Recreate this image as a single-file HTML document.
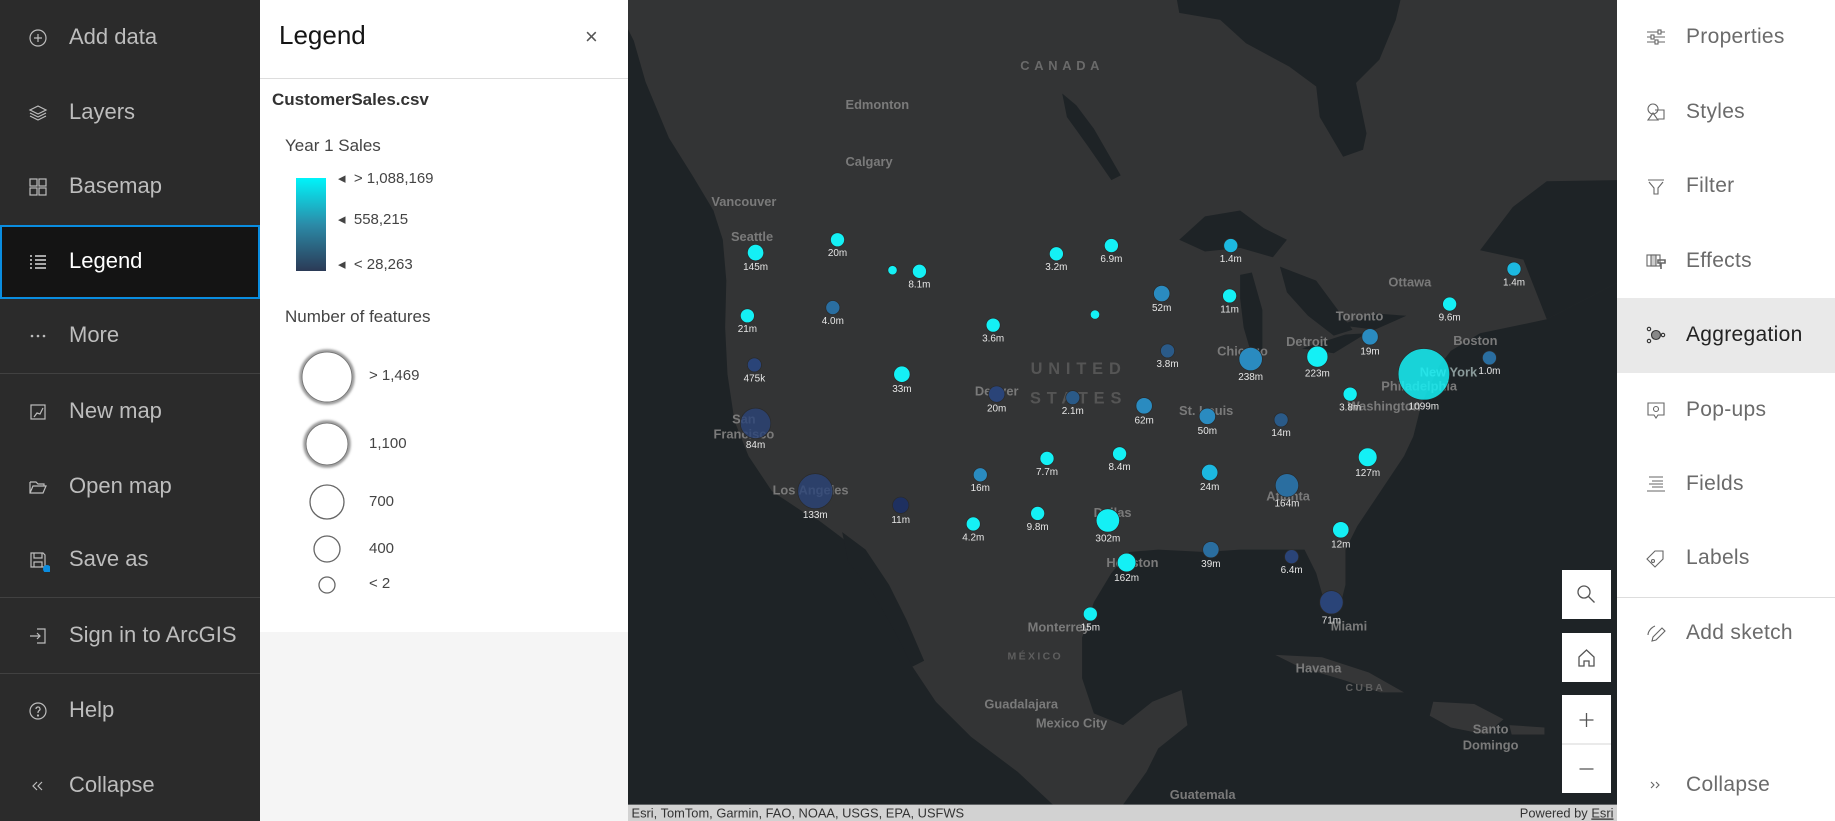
<!DOCTYPE html>
<html><head><meta charset="utf-8">
<style>
*{margin:0;padding:0;box-sizing:border-box}
body{width:1835px;height:821px;overflow:hidden;font-family:"Liberation Sans",sans-serif;background:#2b2b2b;position:relative}
#left{position:absolute;left:0;top:0;width:260px;height:821px;background:#2b2b2b}
.li{position:absolute;left:0;width:260px;height:40px;color:#bdbdbd;font-size:22px;line-height:40px}
.li span{position:absolute;left:69px}
.li svg{position:absolute;left:28px;top:11px}
.div{position:absolute;left:0;width:260px;height:1px;background:#414141}
#legend{position:absolute;left:260px;top:0;width:368px;height:821px;background:#f5f5f5}
#lp{position:absolute;left:0;top:0;width:368px;height:632px;background:#fff}
#map{position:absolute;left:628px;top:0;width:989px;height:821px}
#right{position:absolute;left:1617px;top:0;width:218px;height:821px;background:#fff}
.ri{position:absolute;left:0;width:218px;height:40px;color:#6b6b6b;font-size:21px;line-height:40px;letter-spacing:.3px}
.ri span{position:absolute;left:69px}
.ri svg{position:absolute;left:29px;top:10px}
.btn{position:absolute;left:1562px;width:49px;background:#fff}
</style></head><body>
<div id="left">
 <div style="position:absolute;left:0;top:225px;width:260px;height:74px;background:#141414;border:2px solid #0a8de0"></div>
 <div class="li" style="top:17px"><svg width="20" height="20" viewBox="0 0 20 20" fill="none" stroke="#bdbdbd" stroke-width="1.2"><circle cx="10" cy="10" r="8"/><path d="M10 6v8M6 10h8"/></svg><span>Add data</span></div>
 <div class="li" style="top:92px"><svg width="20" height="20" viewBox="0 0 20 20" fill="none" stroke="#bdbdbd" stroke-width="1.2"><path d="M10 3l8 4-8 4-8-4z M2 10l8 4 8-4 M2 13l8 4 8-4"/></svg><span>Layers</span></div>
 <div class="li" style="top:166px"><svg width="20" height="20" viewBox="0 0 20 20" fill="none" stroke="#bdbdbd" stroke-width="1.2"><rect x="2" y="2" width="7" height="7"/><rect x="11" y="2" width="7" height="7"/><rect x="2" y="11" width="7" height="7"/><rect x="11" y="11" width="7" height="7"/></svg><span>Basemap</span></div>
 <div class="li" style="top:241px;color:#fff"><svg width="20" height="20" viewBox="0 0 20 20" fill="none" stroke="#fff" stroke-width="1.3"><path d="M7 4h11M7 8h11M7 12h11M7 16h11M2 4h2M2 8h2M2 12h2M2 16h2"/></svg><span>Legend</span></div>
 <div class="li" style="top:315px"><svg width="20" height="20" viewBox="0 0 20 20" fill="#bdbdbd"><circle cx="4" cy="10" r="1.3"/><circle cx="10" cy="10" r="1.3"/><circle cx="16" cy="10" r="1.3"/></svg><span>More</span></div>
 <div class="div" style="top:373px"></div>
 <div class="li" style="top:391px"><svg width="20" height="20" viewBox="0 0 20 20" fill="none" stroke="#bdbdbd" stroke-width="1.2"><rect x="3" y="3" width="14" height="14"/><path d="M6 15l3-4 3 1 3-6"/></svg><span>New map</span></div>
 <div class="li" style="top:466px"><svg width="20" height="20" viewBox="0 0 20 20" fill="none" stroke="#bdbdbd" stroke-width="1.2"><path d="M2 5h6l2 2h6v2M2 5v11h13l3-7H5l-3 7"/></svg><span>Open map</span></div>
 <div class="li" style="top:539px"><svg width="22" height="22" viewBox="0 0 22 22" fill="none" stroke="#bdbdbd" stroke-width="1.2"><path d="M3 3h12l2 2v12H3z M6 3v5h8V3 M6 17v-5h8v5"/><circle cx="19" cy="19" r="4" fill="#0a8de0" stroke="none"/></svg><span>Save as</span></div>
 <div class="div" style="top:597px"></div>
 <div class="li" style="top:615px"><svg width="20" height="20" viewBox="0 0 20 20" fill="none" stroke="#bdbdbd" stroke-width="1.2"><path d="M9 3h8v14H9 M2 10h10M9 7l3 3-3 3"/></svg><span>Sign in to ArcGIS</span></div>
 <div class="div" style="top:673px"></div>
 <div class="li" style="top:690px"><svg width="20" height="20" viewBox="0 0 20 20" fill="none" stroke="#bdbdbd" stroke-width="1.2"><circle cx="10" cy="10" r="8"/><path d="M8 8a2 2 0 1 1 3 1.7c-1 .6-1 1-1 2.3"/><circle cx="10" cy="14.5" r=".5"/></svg><span>Help</span></div>
 <div class="li" style="top:765px"><svg width="20" height="20" viewBox="0 0 20 20" fill="none" stroke="#bdbdbd" stroke-width="1.2"><path d="M9 6l-4 4 4 4M14 6l-4 4 4 4"/></svg><span>Collapse</span></div>
</div>

<div id="legend">
 <div id="lp">
  <div style="position:absolute;left:19px;top:20px;font-size:26px;color:#151515">Legend</div>
  <div style="position:absolute;left:325px;top:24px;font-size:22px;color:#555">×</div>
  <div style="position:absolute;left:0;top:78px;width:368px;height:1px;background:#ddd"></div>
  <div style="position:absolute;left:12px;top:90px;font-size:17px;font-weight:bold;color:#323232">CustomerSales.csv</div>
  <div style="position:absolute;left:25px;top:136px;font-size:17px;color:#444">Year 1 Sales</div>
  <div style="position:absolute;left:36px;top:178px;width:30px;height:93px;background:linear-gradient(#00f4fa,#2b8ba8 50%,#2b3a56)"></div>
  <div style="position:absolute;left:78px;top:169px;font-size:15px;color:#444;line-height:20px">◂&nbsp; &gt; 1,088,169</div>
  <div style="position:absolute;left:78px;top:210px;font-size:15px;color:#444;line-height:20px">◂&nbsp; 558,215</div>
  <div style="position:absolute;left:78px;top:255px;font-size:15px;color:#444;line-height:20px">◂&nbsp; &lt; 28,263</div>
  <div style="position:absolute;left:25px;top:307px;font-size:17px;color:#444">Number of features</div>
  <svg style="position:absolute;left:0;top:340px" width="200" height="260">
   <defs><filter id="sh"><feGaussianBlur stdDeviation="1.2"/></filter></defs>
   <circle cx="67" cy="37" r="26" fill="none" stroke="#888" stroke-width="3" filter="url(#sh)"/><circle cx="67" cy="37" r="25" fill="#fff" stroke="#777" stroke-width="1"/>
   <circle cx="67" cy="104" r="22" fill="none" stroke="#888" stroke-width="3" filter="url(#sh)"/><circle cx="67" cy="104" r="21" fill="#fff" stroke="#777" stroke-width="1"/>
   <circle cx="67" cy="162" r="17" fill="#fff" stroke="#666" stroke-width="1.3"/>
   <circle cx="67" cy="209" r="13" fill="#fff" stroke="#666" stroke-width="1.3"/>
   <circle cx="67" cy="245" r="8" fill="#fff" stroke="#666" stroke-width="1.3"/>
  </svg>
  <div style="position:absolute;left:109px;top:367px;font-size:15px;color:#444">&gt; 1,469</div>
  <div style="position:absolute;left:109px;top:435px;font-size:15px;color:#444">1,100</div>
  <div style="position:absolute;left:109px;top:493px;font-size:15px;color:#444">700</div>
  <div style="position:absolute;left:109px;top:540px;font-size:15px;color:#444">400</div>
  <div style="position:absolute;left:109px;top:575px;font-size:15px;color:#444">&lt; 2</div>
 </div>
</div>

<svg id="map" viewBox="537 0 845 702" preserveAspectRatio="none" font-family="Liberation Sans, sans-serif">
 <rect x="537" y="0" width="845" height="702" fill="#1e2326"/>
 <path fill="#333435" d="M537 0 L1006 0 L1008 11 L1043 17 L1065 37 L1102 57 L1125 74 L1128 100 L1148 134 L1165 128 L1168 114 L1159 71 L1179 51 L1193 17 L1197 0 L1382 0 L1382 242 L1322 273 L1265 285 L1240 300 L1230 313 L1215 345 L1208 373 L1200 390 L1180 420 L1160 450 L1150 470 L1150 500 L1145 520 L1135 525 L1125 490 L1115 470 L1095 470 L1060 470 L1030 472 L990 470 L965 472 L950 490 L935 515 L925 545 L925 580 L935 610 L960 620 L985 600 L1010 590 L1015 620 L990 640 L980 660 L960 688 L900 688 L870 660 L830 630 L800 600 L780 570 L760 520 L740 480 L720 460 L700 445 L690 440 L660 420 L640 390 L628 360 L622 320 L620 280 L621 240 L618 205 L610 180 L592 150 L572 118 L552 70 L542 35 L537 25 Z"/>
 <path fill="#1e2326" d="M1382 154 L1322 155 L1293 177 L1265 214 L1302 222 L1322 273 L1382 242 Z"/>
 <path fill="#1e2326" d="M720 455 L740 470 L760 500 L775 530 L790 565 L780 570 L765 540 L745 505 L725 480 Z"/>
 <path fill="#353637" d="M1090 560 L1130 562 L1170 575 L1200 592 L1180 592 L1150 582 L1110 570 Z M1225 600 L1260 602 L1285 615 L1270 628 L1240 622 L1222 612 Z M1290 620 L1320 622 L1320 628 L1292 628Z"/>
 <path fill="#1e2326" d="M1008 205 L1030 185 L1060 180 L1080 195 L1100 205 L1088 220 L1060 212 L1030 215 Z M1060 235 L1070 233 L1079 265 L1079 300 L1070 304 L1063 280 L1060 255 Z M1094 228 L1125 240 L1156 282 L1140 287 L1118 270 L1100 250 Z M1113 298 L1150 286 L1168 285 L1140 302 Z M1145 278 L1175 268 L1202 270 L1175 282 Z M908 80 L920 90 L935 110 L958 150 L950 154 L930 125 L912 100 Z"/>
 <g font-weight="bold" fill="#7a7a7a" font-size="11" text-anchor="middle">
  <text x="908" y="60" letter-spacing="4" fill="#6a6a6a">CANADA</text>
  <text x="750" y="93">Edmonton</text><text x="743" y="142">Calgary</text><text x="636" y="176">Vancouver</text>
  <text x="643" y="206">Seattle</text><text x="1205" y="245">Ottawa</text><text x="1162" y="274">Toronto</text>
  <text x="1117" y="296">Detroit</text><text x="1062" y="304">Chicago</text><text x="1261" y="295">Boston</text>
  <text x="1238" y="322" fill="#8a9a9a">New York</text><text x="1213" y="334">Philadelphia</text><text x="1183" y="351">Washington</text>
  <text x="852" y="338">Denver</text><text x="1031" y="355">St. Louis</text><text x="636" y="362">San</text><text x="636" y="375">Francisco</text>
  <text x="693" y="423">Los Angeles</text><text x="951" y="442">Dallas</text><text x="1101" y="428">Atlanta</text>
  <text x="968" y="485">Houston</text><text x="1153" y="539">Miami</text><text x="905" y="540">Monterrey</text>
  <text x="885" y="564" font-size="9" letter-spacing="2" fill="#5e5e5e">MÉXICO</text><text x="1127" y="575">Havana</text>
  <text x="1167" y="591" font-size="9" letter-spacing="2" fill="#5e5e5e">CUBA</text><text x="873" y="606">Guadalajara</text>
  <text x="916" y="622">Mexico City</text><text x="1274" y="627">Santo</text><text x="1274" y="641">Domingo</text>
  <text x="1028" y="683">Guatemala</text>
  <text x="922" y="320" font-size="14" letter-spacing="5" fill="#555">UNITED</text>
  <text x="922" y="345" font-size="14" letter-spacing="5" fill="#555">STATES</text>
 </g>
 <g id="pts" stroke="#2a2a2a" stroke-width=".6"></g>
 <g fill="#e6e6e6" font-size="8.5" text-anchor="middle" id="lbl"></g>
 <rect x="537" y="688" width="845" height="14" fill="#d2d2d2"/>
 <text x="540" y="699" font-size="11" fill="#333">Esri, TomTom, Garmin, FAO, NOAA, USGS, EPA, USFWS</text>
 <text x="1379" y="699" font-size="11" fill="#333" text-anchor="end">Powered by <tspan text-decoration="underline">Esri</tspan></text>
</svg>

<div class="btn" style="top:570px;height:49px"><svg width="49" height="49" viewBox="0 0 49 49" fill="none" stroke="#555" stroke-width="1.3"><circle cx="22" cy="22" r="6"/><path d="M26.5 26.5l6 6"/></svg></div>
<div class="btn" style="top:633px;height:49px"><svg width="49" height="49" viewBox="0 0 49 49" fill="none" stroke="#555" stroke-width="1.3"><path d="M17 24l7.5-7 7.5 7v9h-5v-5h-5v5h-5z"/></svg></div>
<div class="btn" style="top:695px;height:98px"><svg width="49" height="98" viewBox="0 0 49 98" fill="none" stroke="#555" stroke-width="1.3"><path d="M24.5 18v14M17.5 25h14M17.5 74h14"/><path d="M0 49h49" stroke="#ddd"/></svg></div>

<div id="right">
 <div style="position:absolute;left:0;top:298px;width:218px;height:75px;background:#e9e9e9"></div>
 <div style="position:absolute;left:0;top:597px;width:218px;height:1px;background:#ddd"></div>
 <div class="ri" style="top:17px"><svg width="20" height="20" viewBox="0 0 20 20" fill="none" stroke="#666" stroke-width="1.1"><path d="M1 5h18M1 10h18M1 15h18"/><rect x="12" y="3" width="3" height="4" fill="#fff"/><rect x="5" y="8" width="3" height="4" fill="#fff"/><rect x="9" y="13" width="3" height="4" fill="#fff"/></svg><span>Properties</span></div>
 <div class="ri" style="top:92px"><svg width="20" height="20" viewBox="0 0 20 20" fill="none" stroke="#666" stroke-width="1.1"><circle cx="7" cy="7" r="5"/><path d="M2 18l5-7 5 7z M9 8h9v9h-6"/></svg><span>Styles</span></div>
 <div class="ri" style="top:166px"><svg width="20" height="20" viewBox="0 0 20 20" fill="none" stroke="#666" stroke-width="1.1"><path d="M2 4h16M3 6l5 6v6h4v-6l5-6"/></svg><span>Filter</span></div>
 <div class="ri" style="top:241px"><svg width="20" height="20" viewBox="0 0 20 20" fill="none" stroke="#666" stroke-width="1.1"><rect x="1" y="4" width="13" height="11"/><rect x="5" y="4" width="5" height="11" fill="#ccc"/><path d="M12 9h7v3h-7z M15 12v6" stroke-width="1.6"/></svg><span>Effects</span></div>
 <div class="ri" style="top:315px;color:#222"><svg width="20" height="20" viewBox="0 0 20 20" fill="none" stroke="#333" stroke-width="1.1"><circle cx="10" cy="10" r="4.5" fill="#888"/><circle cx="3" cy="4" r="1.7"/><circle cx="3" cy="16" r="1.7"/><circle cx="17" cy="10" r="1.7"/></svg><span>Aggregation</span></div>
 <div class="ri" style="top:390px"><svg width="20" height="20" viewBox="0 0 20 20" fill="none" stroke="#666" stroke-width="1.1"><path d="M2 3h16v12h-6l-2 3-2-3H2z"/><circle cx="10" cy="9" r="2.5"/></svg><span>Pop-ups</span></div>
 <div class="ri" style="top:464px"><svg width="20" height="20" viewBox="0 0 20 20" fill="none" stroke="#666" stroke-width="1.1"><path d="M3 3h14M6 7h11M3 10h14M6 13h11M1 17h18"/></svg><span>Fields</span></div>
 <div class="ri" style="top:538px"><svg width="20" height="20" viewBox="0 0 20 20" fill="none" stroke="#666" stroke-width="1.1"><path d="M9 3h8v8l-8 8-8-8z"/><circle cx="7" cy="13" r="1.5"/></svg><span>Labels</span></div>
 <div class="ri" style="top:613px"><svg width="20" height="20" viewBox="0 0 20 20" fill="none" stroke="#666" stroke-width="1.1"><path d="M6 18l1-4L16 5l3 3-9 9z M2 12c0-4 4-8 7-9"/></svg><span>Add sketch</span></div>
 <div class="ri" style="top:765px"><svg width="20" height="20" viewBox="0 0 20 20" fill="none" stroke="#666" stroke-width="1.1"><path d="M5 7l3 3-3 3M10 7l3 3-3 3"/></svg><span>Collapse</span></div>
</div>

<script>
var C="#14f0f5",B1="#1cb8e0",B2="#2a8bc0",B3="#2a6ea0",B4="#2a5a88",B5="#2a4478",B6="#1e3060";
var P=[[646,216,7,C,"145m"],[716,205,6,C,"20m"],[763,231,4,C,""],[786,232,6,C,"8.1m"],[903,217,6,C,"3.2m"],[950,210,6,C,"6.9m"],[1052,210,6,B1,"1.4m"],[993,251,7,B2,"52m"],[1051,253,6,C,"11m"],[639,270,6,C,"21m"],[712,263,6,B3,"4.0m"],[849,278,6,C,"3.6m"],[936,269,4,C,""],[998,300,6,B4,"3.8m"],[1069,307,10,B2,"238m"],[1126,305,9,C,"223m"],[1171,288,7,B2,"19m"],[1239,260,6,C,"9.6m"],[1294,230,6,B1,"1.4m"],[1273,306,6,B3,"1.0m"],[1217,320,22,C,"1099m"],[1154,337,6,C,"3.8m"],[645,312,6,B5,"475k"],[771,320,7,C,"33m"],[852,337,7,B5,"20m"],[917,340,6,B4,"2.1m"],[978,347,7,B2,"62m"],[1032,356,7,B2,"50m"],[1095,359,6,B4,"14m"],[646,362,13,B5,"84m"],[895,392,6,C,"7.7m"],[957,388,6,C,"8.4m"],[838,406,6,B2,"16m"],[1034,404,7,B1,"24m"],[1100,415,10,B3,"164m"],[1169,391,8,C,"127m"],[697,420,15,B5,"133m"],[770,432,7,B6,"11m"],[887,439,6,C,"9.8m"],[832,448,6,C,"4.2m"],[947,445,10,C,"302m"],[963,481,8,C,"162m"],[1035,470,7,B3,"39m"],[1104,476,6,B5,"6.4m"],[1146,453,7,C,"12m"],[1138,515,10,B5,"71m"],[932,525,6,C,"15m"]];
var ns="http://www.w3.org/2000/svg",g=document.getElementById("pts"),l=document.getElementById("lbl");
P.forEach(function(p){var c=document.createElementNS(ns,"circle");c.setAttribute("cx",p[0]);c.setAttribute("cy",p[1]);c.setAttribute("r",p[2]);c.setAttribute("fill",p[3]);if(p[2]>12)c.setAttribute("fill-opacity",p[3]==C?".85":".8");g.appendChild(c);
if(p[4]){var t=document.createElementNS(ns,"text");t.setAttribute("x",p[0]);t.setAttribute("y",p[1]+p[2]+8);t.textContent=p[4];l.appendChild(t);}});
</script>
</body></html>
